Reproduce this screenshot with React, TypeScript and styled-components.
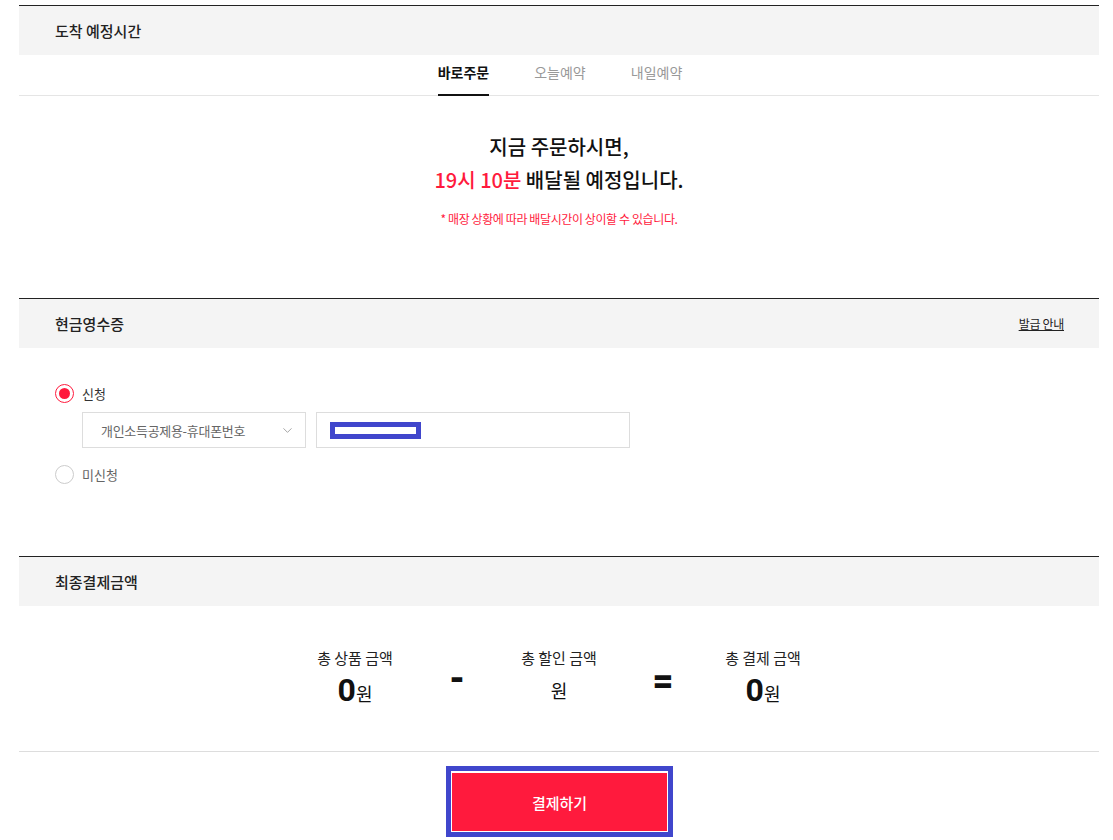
import React, { useState } from "react";
import styled, { createGlobalStyle } from "styled-components";
import { ChevronDown } from "lucide-react";

const RED = "#ff1a3d";
const FONT = `"Noto Sans CJK KR", "Noto Sans", Roboto, sans-serif`;

const GlobalStyle = createGlobalStyle`
  html, body {
    margin: 0;
    padding: 0;
    background: #fff;
    font-family: ${FONT};
    color: #222;
  }
  * { box-sizing: border-box; }
`;

const tabs = ["바로주문", "오늘예약", "내일예약"];

const totals = [
  { label: "총 상품 금액", value: "0" },
  { label: "총 할인 금액", value: "" },
  { label: "총 결제 금액", value: "0" },
];

const App: React.FC = () => {
  const [activeTab, setActiveTab] = useState(0);
  const [receipt, setReceipt] = useState(true);

  return (
    <>
      <GlobalStyle />
      <Page>
        <Section>
          <SectionHeader>
            <SectionTitle>도착 예정시간</SectionTitle>
          </SectionHeader>
          <TabBar>
            {tabs.map((t, i) => (
              <Tab key={t} $active={i === activeTab} onClick={() => setActiveTab(i)}>
                {t}
              </Tab>
            ))}
          </TabBar>
          <Arrival>
            <ArrivalLine>지금 주문하시면,</ArrivalLine>
            <ArrivalLine>
              <Accent>19시 10분</Accent> 배달될 예정입니다.
            </ArrivalLine>
            <Notice>* 매장 상황에 따라 배달시간이 상이할 수 있습니다.</Notice>
          </Arrival>
        </Section>

        <Section>
          <SectionHeader>
            <SectionTitle>현금영수증</SectionTitle>
            <GuideLink>발급 안내</GuideLink>
          </SectionHeader>
          <ReceiptBody>
            <RadioRow onClick={() => setReceipt(true)}>
              <Radio $checked={receipt} />
              <RadioLabel $checked={receipt}>신청</RadioLabel>
            </RadioRow>
            <FieldRow>
              <SelectBox>
                <span>개인소득공제용-휴대폰번호</span>
                <ChevronDown size={15} strokeWidth={1.2} color="#888" />
              </SelectBox>
              <InputBox>
                <Masked />
              </InputBox>
            </FieldRow>
            <RadioRow onClick={() => setReceipt(false)}>
              <Radio $checked={!receipt} />
              <RadioLabel $checked={!receipt}>미신청</RadioLabel>
            </RadioRow>
          </ReceiptBody>
        </Section>

        <Section>
          <SectionHeader>
            <SectionTitle>최종결제금액</SectionTitle>
          </SectionHeader>
          <TotalsBody>
            {totals.map((t, i) => (
              <React.Fragment key={t.label}>
                {i > 0 && <Operator $lift={i === 2}>{i === 1 ? "-" : "="}</Operator>}
                <TotalItem>
                  <TotalLabel>{t.label}</TotalLabel>
                  <TotalValue>
                    {t.value && <Amount>{t.value}</Amount>}
                    <Won>원</Won>
                  </TotalValue>
                </TotalItem>
              </React.Fragment>
            ))}
          </TotalsBody>
          <ButtonArea>
            <ButtonFrame>
              <PayButton>결제하기</PayButton>
            </ButtonFrame>
          </ButtonArea>
        </Section>
      </Page>
    </>
  );
};

export default App;

const Page = styled.div`
  width: 1080px;
  margin-left: 19px;
  padding-top: 5px;
`;

const Section = styled.section`
  border-top: 1px solid #222;
`;

const SectionHeader = styled.div`
  height: 49px;
  background: #f4f4f4;
  display: flex;
  align-items: center;
  justify-content: space-between;
  padding: 0 35px 0 36px;
`;

const SectionTitle = styled.h3`
  margin: 0;
  font-size: 15px;
  font-weight: 500;
  color: #222;
`;

const GuideLink = styled.a`
  font-size: 12px;
  color: #222;
  text-decoration: underline;
  letter-spacing: -0.3px;
  cursor: pointer;
`;

const TabBar = styled.div`
  height: 41px;
  display: flex;
  justify-content: center;
  gap: 45px;
  border-bottom: 1px solid #e5e5e5;
  padding-left: 2px;
`;

const Tab = styled.button<{ $active: boolean }>`
  height: 41px;
  margin-bottom: -1px;
  padding: 0 0 5px;
  border: none;
  border-bottom: 2px solid ${(p) => (p.$active ? "#111" : "transparent")};
  background: none;
  font-family: ${FONT};
  font-size: 14px;
  font-weight: ${(p) => (p.$active ? 700 : 400)};
  color: ${(p) => (p.$active ? "#111" : "#999")};
  cursor: pointer;
`;

const Arrival = styled.div`
  display: flex;
  flex-direction: column;
  align-items: center;
  padding: 34px 0 70px;
`;

const ArrivalLine = styled.p`
  margin: 0;
  font-size: 20px;
  line-height: 33px;
  font-weight: 500;
  color: #111;
`;

const Accent = styled.span`
  color: ${RED};
`;

const Notice = styled.p`
  margin: 14px 0 0;
  font-size: 12px;
  line-height: 18px;
  color: ${RED};
  letter-spacing: -0.4px;
`;

const ReceiptBody = styled.div`
  display: flex;
  flex-direction: column;
  align-items: flex-start;
  padding: 35px 36px 72px;
`;

const RadioRow = styled.label`
  display: flex;
  align-items: center;
  gap: 8px;
  height: 20px;
  cursor: pointer;
`;

const Radio = styled.span<{ $checked: boolean }>`
  width: 19px;
  height: 19px;
  border-radius: 50%;
  border: 1px solid ${(p) => (p.$checked ? RED : "#ccc")};
  background: #fff;
  display: flex;
  align-items: center;
  justify-content: center;
  &::after {
    content: "";
    width: 11px;
    height: 11px;
    border-radius: 50%;
    background: ${(p) => (p.$checked ? RED : "transparent")};
  }
`;

const RadioLabel = styled.span<{ $checked: boolean }>`
  font-size: 13px;
  color: ${(p) => (p.$checked ? "#333" : "#666")};
`;

const FieldRow = styled.div`
  display: flex;
  gap: 10px;
  margin: 9px 0 16px 27px;
`;

const SelectBox = styled.div`
  width: 224px;
  height: 36px;
  border: 1px solid #ddd;
  display: flex;
  align-items: center;
  justify-content: space-between;
  padding: 0 10px 0 18px;
  font-size: 13px;
  color: #666;
  letter-spacing: -0.3px;
`;

const InputBox = styled.div`
  width: 314px;
  height: 36px;
  border: 1px solid #ddd;
  display: flex;
  align-items: center;
  padding-left: 13px;
`;

const Masked = styled.span`
  width: 91px;
  height: 17px;
  border: 5px solid #4046cc;
  background: #fff;
`;

const TotalsBody = styled.div`
  display: flex;
  justify-content: center;
  align-items: center;
  padding: 42px 0 43px;
  border-bottom: 1px solid #ddd;
`;

const TotalItem = styled.div`
  width: 120px;
  display: flex;
  flex-direction: column;
  align-items: center;
  gap: 4px;
`;

const TotalLabel = styled.span`
  font-size: 15px;
  line-height: 20px;
  color: #222;
`;

const TotalValue = styled.div`
  height: 36px;
  display: flex;
  align-items: baseline;
  justify-content: center;
  color: #111;
`;

const Amount = styled.span`
  font-family: Roboto, ${FONT};
  font-size: 32px;
  line-height: 36px;
  font-weight: 700;
`;

const Won = styled.span`
  font-size: 18px;
  line-height: 36px;
`;

const Operator = styled.span<{ $lift: boolean }>`
  width: 84px;
  text-align: center;
  font-family: Roboto, sans-serif;
  font-size: 36px;
  font-weight: 900;
  line-height: 40px;
  color: #111;
  margin-top: ${(p) => (p.$lift ? "6px" : "2px")};
  padding-left: ${(p) => (p.$lift ? "4px" : "0")};
`;

const ButtonArea = styled.div`
  display: flex;
  justify-content: center;
  padding: 14px 0 4px 1px;
`;

const ButtonFrame = styled.div`
  border: 5px solid #4046cc;
  padding: 2px 1px 1px;
  background: #fff;
`;

const PayButton = styled.button`
  width: 215px;
  height: 58px;
  border: none;
  background: ${RED};
  color: #fff;
  font-family: ${FONT};
  font-size: 15px;
  font-weight: 500;
  cursor: pointer;
`;
